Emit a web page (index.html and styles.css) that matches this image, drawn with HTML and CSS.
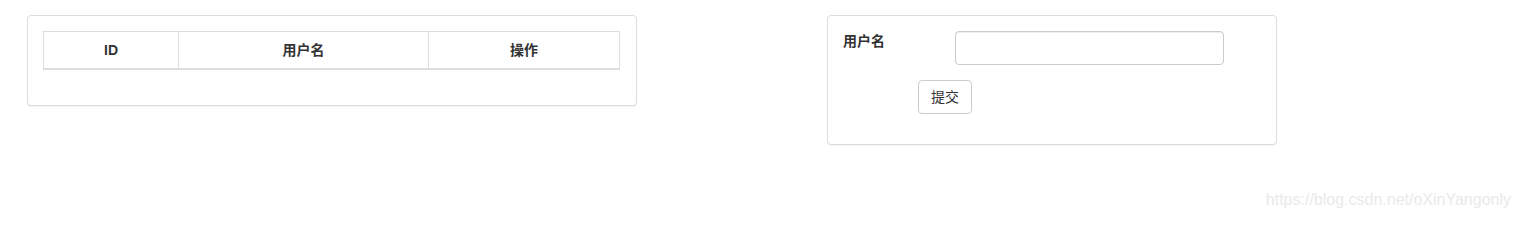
FILE: index.html
```html
<!DOCTYPE html>
<html lang="zh-CN">
<head>
<meta charset="utf-8">
<title>用户</title>
<link rel="stylesheet" href="styles.css">
</head>
<body>
<div class="page">
  <div class="panel panel-list">
    <div class="panel-body">
      <table class="table">
        <colgroup>
          <col class="col-id">
          <col class="col-name">
          <col class="col-op">
        </colgroup>
        <thead>
          <tr>
            <th>ID</th>
            <th>用户名</th>
            <th>操作</th>
          </tr>
        </thead>
        <tbody></tbody>
      </table>
    </div>
  </div>
  <div class="panel panel-form">
    <div class="panel-body">
      <form class="form">
        <div class="form-group">
          <label class="control-label" for="username">用户名</label>
          <input class="form-control" id="username" type="text">
        </div>
        <div class="form-group">
          <button class="btn" type="button">提交</button>
        </div>
      </form>
    </div>
  </div>
</div>
<div class="watermark">https://blog.csdn.net/oXinYangonly</div>
</body>
</html>
```
FILE: styles.css
```css
* { box-sizing: border-box; }
html, body { margin: 0; padding: 0; background: #fff; }
body {
  font-family: "Liberation Sans", Arial, "Noto Sans CJK SC", sans-serif;
  font-size: 14px;
  line-height: 20px;
  color: #333;
  width: 1520px;
  height: 218px;
  position: relative;
  overflow: hidden;
}
.page {
  display: flex;
  align-items: flex-start;
  padding: 15px 0 0 27px;
  gap: 190px;
}
.panel {
  background: #fff;
  border: 1px solid #ddd;
  border-radius: 4px;
  box-shadow: 0 1px 1px rgba(0,0,0,0.05);
}
.panel-list { width: 610px; }
.panel-form { width: 450px; }
.panel-body { padding: 15px; }
.table {
  width: 577px;
  border-collapse: collapse;
  border-spacing: 0;
  margin-bottom: 20px;
}
.col-id { width: 135px; }
.col-name { width: 250px; }
.table th {
  border: 1px solid #ddd;
  border-bottom: 2px solid #ddd;
  padding: 8px;
  line-height: 20px;
  font-weight: bold;
  text-align: center;
  vertical-align: bottom;
}
.form-group {
  display: flex;
  align-items: flex-start;
  margin-bottom: 15px;
}
.control-label {
  width: 112px;
  font-weight: bold;
  line-height: 20px;
}
.form-control {
  width: 269px;
  height: 34px;
  padding: 6px 12px;
  font: inherit;
  color: #555;
  background: #fff;
  border: 1px solid #ccc;
  border-radius: 4px;
  box-shadow: inset 0 1px 1px rgba(0,0,0,0.075);
  margin: 0;
}
.btn {
  margin-left: 75px;
  padding: 6px 12px;
  font: inherit;
  line-height: 20px;
  color: #333;
  background: #fff;
  border: 1px solid #ccc;
  border-radius: 4px;
  cursor: pointer;
}
.watermark {
  position: absolute;
  right: 9px;
  top: 190px;
  font-size: 16px;
  line-height: 20px;
  color: #eaeaea;
  white-space: nowrap;
}
```
